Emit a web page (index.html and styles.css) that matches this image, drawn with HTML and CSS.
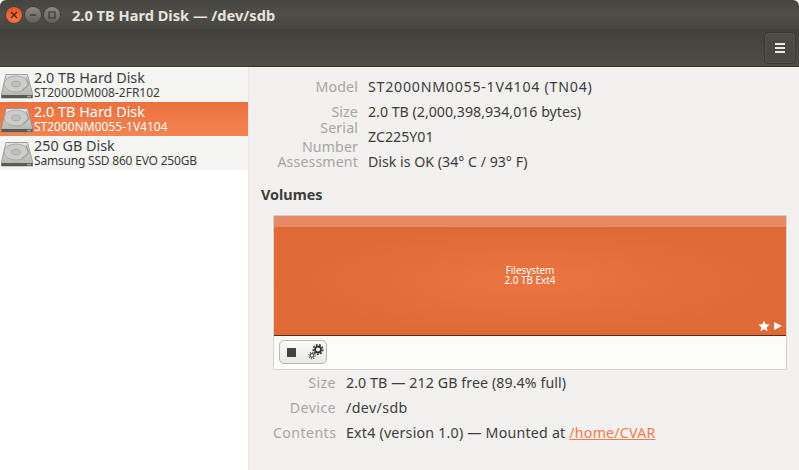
FILE: index.html
```html
<!DOCTYPE html>
<html lang="en">
<head>
<meta charset="utf-8">
<title>2.0 TB Hard Disk — /dev/sdb</title>
<link rel="stylesheet" href="styles.css">
</head>
<body>
<svg class="defs" width="0" height="0" aria-hidden="true">
  <defs>
    <linearGradient id="diskTop" x1="0" y1="0" x2="0" y2="1"><stop offset="0" stop-color="#e2e3e0"/><stop offset="1" stop-color="#b0b0ad"/></linearGradient>
    <symbol id="disk" viewBox="0 0 32 28">
      <path d="M5 2.500h21.500L31.500 21.500v4.500H.5v-4.500z" fill="url(#diskTop)" stroke="#8f8f8c" stroke-width=".8"/>
      <ellipse cx="15" cy="12" rx="12" ry="8" fill="#cdcdca" stroke="#a0a09d" stroke-width=".8"/>
      <ellipse cx="15" cy="12" rx="4.500" ry="2.800" fill="#c0c0be" stroke="#989896" stroke-width=".7"/>
      <path d="M25 5l3 8-7 5" fill="none" stroke="#989896" stroke-width="1"/>
      <rect x=".5" y="23" width="31" height="3" fill="#5a5a55"/>
      <rect x="26" y="23.800" width="4" height="1.500" fill="#a5a5a0"/>
    </symbol>
  </defs>
</svg>
<div class="window">
  <header class="titlebar">
    <div class="wm-buttons">
      <span class="wm wm-close">
        <svg viewBox="0 0 8 8" width="8" height="8"><path d="M1 1l6 6M7 1l-6 6" stroke="#4a1a08" stroke-width="1.200"/></svg>
      </span>
      <span class="wm">
        <svg viewBox="0 0 8 8" width="8" height="8"><path d="M1 4h6" stroke="#3a3a36" stroke-width="1.400"/></svg>
      </span>
      <span class="wm">
        <svg viewBox="0 0 8 8" width="8" height="8"><rect x="1" y="1" width="6" height="6" fill="none" stroke="#3a3a36" stroke-width="1.200"/></svg>
      </span>
    </div>
    <span class="title">2.0 TB Hard Disk — /dev/sdb</span>
  </header>
  <div class="toolbar">
    <button class="menu-btn" type="button" aria-label="Menu"><span></span><span></span><span></span></button>
  </div>
  <div class="content">
    <aside class="sidebar">
      <div class="disk-row">
        <svg class="disk-icon"><use href="#disk"/></svg>
        <div class="disk-text"><div class="disk-name">2.0 TB Hard Disk</div><div class="disk-model">ST2000DM008-2FR102</div></div>
      </div>
      <div class="disk-row selected">
        <svg class="disk-icon"><use href="#disk"/></svg>
        <div class="disk-text"><div class="disk-name">2.0 TB Hard Disk</div><div class="disk-model">ST2000NM0055-1V4104</div></div>
      </div>
      <div class="disk-row">
        <svg class="disk-icon"><use href="#disk"/></svg>
        <div class="disk-text"><div class="disk-name">250 GB Disk</div><div class="disk-model disk-model-tight">Samsung SSD 860 EVO 250GB</div></div>
      </div>
    </aside>
    <main class="details">
      <dl class="props">
        <dt>Model</dt><dd class="spread-wide">ST2000NM0055-1V4104 (TN04)</dd>
        <dt>Size</dt><dd>2.0 TB (2,000,398,934,016 bytes)</dd>
        <dt>Serial Number</dt><dd>ZC225Y01</dd>
        <dt>Assessment</dt><dd>Disk is OK (34° C / 93° F)</dd>
      </dl>
      <h2 class="volumes-title">Volumes</h2>
      <section class="volume-frame">
        <div class="volume-strip"></div>
        <div class="volume-map">
          <div class="fs-label">Filesystem<br>2.0 TB Ext4</div>
          <div class="fs-marks">
            <svg viewBox="0 0 12 12" width="12" height="12"><path d="M6 .5l1.700 3.700 4 .4-3 2.700.9 4L6 9.200l-3.600 2.100.9-4-3-2.700 4-.4z" fill="#fff"/></svg>
            <svg viewBox="0 0 8 10" width="8" height="10"><path d="M0 1l8 4-8 4z" fill="#fff"/></svg>
          </div>
        </div>
        <div class="volume-bar">
          <div class="btn-group">
            <span class="stop"></span>
            <svg class="gears" viewBox="0 0 20 20" width="20" height="20">
              <circle cx="12" cy="7.500" r="3" fill="none" stroke="#33332f" stroke-width="1.800"/>
              <circle cx="12" cy="7.500" r="4.800" fill="none" stroke="#33332f" stroke-width="1.500" stroke-dasharray="1.800 1.500"/>
              <circle cx="6" cy="13.500" r="1.800" fill="#fff" stroke="#55554f" stroke-width="1.200"/>
              <circle cx="6" cy="13.500" r="3.200" fill="none" stroke="#55554f" stroke-width="1.100" stroke-dasharray="1.300 1.200"/>
            </svg>
          </div>
        </div>
      </section>
      <dl class="props props-volume">
        <dt>Size</dt><dd class="spread-slight">2.0 TB — 212 GB free (89.4% full)</dd>
        <dt>Device</dt><dd class="spread-path">/dev/sdb</dd>
        <dt>Contents</dt><dd class="spread-mid">Ext4 (version 1.0) — Mounted at <a class="mount" href="#">/home/CVAR</a></dd>
      </dl>
    </main>
  </div>
</div>
</body>
</html>
```
FILE: styles.css
```css
* { box-sizing: border-box; }
html, body { margin: 0; height: 100%; }
body { font-family: "Noto Sans", "Open Sans", sans-serif; font-size: 14px; color: #3c3c3c; background: #f2f1f0; overflow: hidden; }
.defs { position: absolute; }
.window { width: 799px; height: 470px; display: flex; flex-direction: column; }
.titlebar { height: 29px; display: flex; align-items: center; padding-left: 6px; background: linear-gradient(#45443e, #4f4e47 50%, #46453f); border-radius: 6px 6px 0 0; }
.wm-buttons { display: flex; gap: 3px; }
.wm { width: 16px; height: 16px; border-radius: 50%; display: flex; align-items: center; justify-content: center; background: linear-gradient(#8b8a84, #5f5e58); box-shadow: 0 0 0 .5px #33322e; }
.wm-close { background: radial-gradient(circle at 50% 70%, #f6794a, #e04f22); }
.title { margin-left: 12px; color: #e6e4de; font-weight: 700; font-size: 14.6px; }
.toolbar { height: 38px; display: flex; justify-content: flex-end; align-items: flex-start; padding: 3px 3px 0 0; background: linear-gradient(#41403b, #4e4d45); border-bottom: 1px solid #35342f; }
.menu-btn { width: 32px; height: 32px; padding: 0; display: flex; flex-direction: column; gap: 2px; align-items: center; justify-content: center; background: linear-gradient(#4b4a45, #47463f); border: 1px solid #37362f; border-radius: 4px; box-shadow: inset 0 0 0 1px #55544d; }
.menu-btn span { width: 10px; height: 2px; background: #e8e6e0; }
.content { flex: 1; display: flex; min-height: 0; }
.sidebar { width: 249px; background: #fff; border-right: 1px solid #e8e7e5; padding-top: 1px; }
.disk-row { height: 34px; display: flex; align-items: center; padding-left: 1px; background: #f5f5f4; }
.disk-row.selected { background: linear-gradient(#e9713f, #f58350); color: #fff; }
.disk-icon { width: 32px; height: 28px; flex: none; margin-top: 2px; }
.disk-text { margin-left: 1px; }
.disk-name { font-size: 14.4px; line-height: 16px; }
.disk-model { font-size: 12px; line-height: 14px; }
.disk-model-tight { letter-spacing: -.2px; }
.details { flex: 1; padding: 7px 12px 0; display: flex; flex-direction: column; }
.props { margin: 0; display: grid; grid-template-columns: 97px 1fr; column-gap: 10px; grid-auto-rows: 25px; align-items: center; font-size: 14.2px; }
.props dt { text-align: right; color: #a8a6a0; letter-spacing: .12px; }
.props dd { margin: 0; color: #3c3c3c; }
.spread-wide { letter-spacing: .75px; }
.spread-slight { letter-spacing: .1px; }
.spread-path { letter-spacing: .4px; }
.spread-mid { letter-spacing: .22px; }
.volumes-title { margin: 11px 0 0; font-size: 14.4px; font-weight: 700; line-height: 20px; color: #3c3c3c; }
.volume-frame { margin: 10px 0 0 12px; width: 514px; height: 155px; display: flex; flex-direction: column; border: 1px solid #d5d4d1; border-top-color: #cfcecb; border-radius: 2px; background: linear-gradient(#f2f1f0, #fdfdfc); }
.volume-strip { height: 11px; background: #e58a64; flex: none; }
.volume-map { height: 109px; flex: none; position: relative; display: flex; align-items: center; justify-content: center; background: radial-gradient(ellipse at center, #ea7541, #df6a36 70%); border-bottom: 1px solid #5a2c14; }
.fs-label { color: #fff; font-size: 9.9px; line-height: 10px; text-align: center; margin-bottom: 12px; }
.fs-marks { position: absolute; right: 4px; bottom: 3px; display: flex; align-items: center; gap: 4px; }
.volume-bar { padding: 4px 5px; }
.btn-group { width: 48px; height: 24px; display: flex; align-items: center; padding-left: 7px; gap: 11px; border: 1px solid #b9b8b3; border-radius: 5px; background: linear-gradient(#fbfbfa, #e9e8e5); }
.stop { width: 9px; height: 9px; background: #44443f; }
.gears { margin-left: -1px; }
.props-volume { margin-left: 12px; grid-template-columns: 63px 1fr; column-gap: 10px; }
.props-volume dt { letter-spacing: .4px; }
.mount { color: #f47a4a; }
```
